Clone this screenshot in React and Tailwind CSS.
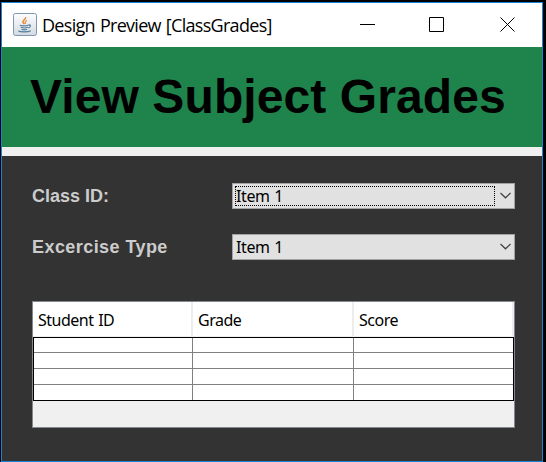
function JavaIcon() {
  return (
    <svg width="24" height="24" viewBox="0 0 24 24" fill="none" className="shrink-0">
      <defs>
        <linearGradient id="tile" x1="0" y1="0" x2="0" y2="1">
          <stop offset="0" stopColor="#fdfdfe" />
          <stop offset="1" stopColor="#d3dae2" />
        </linearGradient>
      </defs>
      <rect x="0.5" y="0.5" width="23" height="22" rx="2" fill="url(#tile)" stroke="#8296ab" />
      <path d="M12.600 4.200c.8 2-3.400 3-2.700 5 .3.800 1 1.300 1.500 1.900" stroke="#e8862e" strokeWidth="1.500" />
      <path d="M14 7.600c-2 .8-2.300 1.800-1.400 3.300" stroke="#e8862e" strokeWidth="1.100" />
      <path d="M6.800 12.200c1.500.8 6.500.8 8.500 0M7.800 14.300c2 .8 5 .8 7 0M8.500 16.200c1.500.8 4 .8 5.500 0M15.300 12c3-.6 2.600 2.300-.2 3" stroke="#527b9d" strokeWidth="1.200" />
      <path d="M5.300 18c2.500 1.200 9.500 1.200 12.500-.3" stroke="#527b9d" strokeWidth="1.100" />
    </svg>
  );
}

function Combo({ value, focused }) {
  return (
    <div className="flex h-[26px] w-[283px] items-center border border-[#a1a1a6] bg-[#e1e1e1] pl-[2px]">
      <div
        className={
          "flex h-5 w-[260px] items-center border border-dotted text-base text-black " +
          (focused ? "border-black" : "border-transparent")
        }
      >
        <span className="font-['Noto_Sans',sans-serif] text-base leading-none tracking-[-0.4px] [word-spacing:1px]">{value}</span>
      </div>
      <svg width="12" height="8" viewBox="0 0 12 8" fill="none" className="ml-[5px]">
        <path d="M0.500 1 5.500 5.800 10.500 1" stroke="#404040" strokeWidth="1.200" />
      </svg>
    </div>
  );
}

function HeaderCell({ children, className }) {
  return (
    <div className={"flex items-center border-r-2 border-[#ededed] pt-[2px] pl-[5px] " + className}>
      <span className="text-base leading-none tracking-[-0.5px] [word-spacing:1px]">{children}</span>
    </div>
  );
}

function GradesTable() {
  return (
    <div className="h-[127px] w-[483px] border border-[#828790] bg-[#f0f0f0] font-['Noto_Sans',sans-serif] text-black">
      <div className="flex h-[35px] border-b border-[#f0f0f0] bg-white">
        <HeaderCell className="w-[160px]">Student ID</HeaderCell>
        <HeaderCell className="w-[161px]">Grade</HeaderCell>
        <HeaderCell className="w-[160px]">Score</HeaderCell>
      </div>
      <div className="grid h-16 grid-cols-[159px_161px_159px] grid-rows-[15px_16px_16px_15px] border border-black bg-white">
        {[0, 1, 2, 3].map((row) =>
          [0, 1, 2].map((col) => (
            <div
              key={row + "-" + col}
              className={
                "border-[#808080] " + (row < 3 ? "border-b " : "") + (col < 2 ? "border-r" : "")
              }
            />
          ))
        )}
      </div>
    </div>
  );
}

export default function App() {
  return (
    <div className="h-[462px] w-[546px] overflow-hidden bg-black pt-[2px] pl-px">
      <div className="flex h-[460px] w-[542px] flex-col border border-[#1883d7] bg-[#333333]">
        <div className="flex h-11 shrink-0 items-center bg-white pl-[11px]">
          <JavaIcon />
          <span className="ml-[5px] w-[318px] font-['Open_Sans',sans-serif] text-[18px] leading-none tracking-[-0.7px] [word-spacing:1px] whitespace-nowrap text-black">
            Design Preview [ClassGrades]
          </span>
          <svg width="156" height="16" viewBox="0 0 156 16" fill="none" stroke="#000" className="shrink-0">
            <path d="M0 7.500h15" />
            <path d="M69.500.5h14v14h-14z" />
            <path d="M140.500.5l14 14M154.500.5l-14 14" />
          </svg>
        </div>
        <div className="flex h-[100px] shrink-0 items-center bg-[#1f834c] pl-7">
          <h1 className="font-['Liberation_Sans',Arial,sans-serif] text-5xl font-bold tracking-[0.1px] whitespace-nowrap text-black">
            View Subject Grades
          </h1>
        </div>
        <div className="h-[9px] shrink-0 bg-[#f0f0f0]" />
        <div className="flex flex-col pt-[27px] pl-[30px] font-['Liberation_Sans',Arial,sans-serif]">
          <div className="flex h-[26px] items-center">
            <span className="w-[200px] text-lg font-bold text-[#cccccc]">Class ID:</span>
            <Combo value="Item 1" focused />
          </div>
          <div className="mt-[25px] flex h-[26px] items-center">
            <span className="w-[200px] text-lg font-bold tracking-[0.43px] text-[#cccccc]">Excercise Type</span>
            <Combo value="Item 1" />
          </div>
          <div className="mt-[41px]">
            <GradesTable />
          </div>
        </div>
      </div>
    </div>
  );
}
